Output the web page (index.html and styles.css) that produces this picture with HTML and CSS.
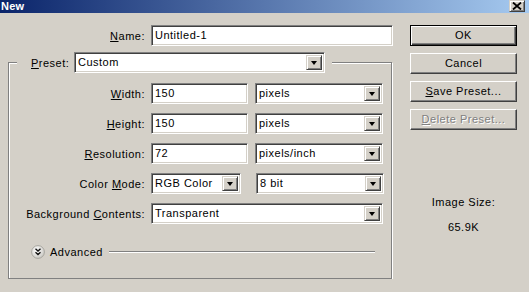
FILE: index.html
```html
<!DOCTYPE html>
<html lang="en">
<head>
    <meta charset="UTF-8">
    <title>New</title>
    <link rel="stylesheet" href="styles.css">
</head>
<body>
    <div class="titlebar">
        <span class="title">New</span>
        <span class="close">
            <svg width="10" height="8" viewBox="0 0 10 8"><path d="M1 0.5l8 7M9 0.5l-8 7" stroke="#000" stroke-width="1.8" fill="none"/></svg>
        </span>
    </div>
    <div class="dialog">
        <div class="main">
            <div class="row name-row">
                <span class="lbl"><u>N</u>ame:</span>
                <div class="field name-field">Untitled-1</div>
            </div>
            <fieldset class="group">
                <legend class="legend">
                    <span class="preset-lbl"><u>P</u>reset:</span>
                    <div class="field select preset">Custom<span class="arrow"></span></div>
                </legend>
                <div class="rows">
                    <div class="row">
                        <span class="lbl"><u>W</u>idth:</span>
                        <div class="field num">150</div>
                        <div class="field select unit">pixels<span class="arrow"></span></div>
                    </div>
                    <div class="row">
                        <span class="lbl"><u>H</u>eight:</span>
                        <div class="field num">150</div>
                        <div class="field select unit">pixels<span class="arrow"></span></div>
                    </div>
                    <div class="row">
                        <span class="lbl"><u>R</u>esolution:</span>
                        <div class="field num">72</div>
                        <div class="field select unit">pixels/inch<span class="arrow"></span></div>
                    </div>
                    <div class="row">
                        <span class="lbl">Color <u>M</u>ode:</span>
                        <div class="field select mode">RGB Color<span class="arrow"></span></div>
                        <div class="field select unit">8 bit<span class="arrow"></span></div>
                    </div>
                    <div class="row">
                        <span class="lbl">Background <u>C</u>ontents:</span>
                        <div class="field select wide">Transparent<span class="arrow"></span></div>
                    </div>
                </div>
                <div class="advanced">
                    <svg class="adv-icon" width="14" height="14" viewBox="0 0 14 14">
                        <defs>
                            <radialGradient id="ball" cx="0.4" cy="0.35" r="0.7">
                                <stop offset="0" stop-color="#ffffff"/>
                                <stop offset="1" stop-color="#c8c6c0"/>
                            </radialGradient>
                        </defs>
                        <circle cx="7" cy="7" r="6.4" fill="url(#ball)" stroke="#9c9a94" stroke-width="0.8"/>
                        <path d="M4.5 3.8l2.5 2.2l2.5-2.2M4.5 7.3l2.5 2.2l2.5-2.2" stroke="#111" stroke-width="1.4" fill="none"/>
                    </svg>
                    <span class="adv-text">Advanced</span>
                    <span class="adv-line"></span>
                </div>
            </fieldset>
        </div>
        <div class="side">
            <div class="btn default">OK</div>
            <div class="btn">Cancel</div>
            <div class="btn"><u>S</u>ave Preset...</div>
            <div class="btn disabled"><u>D</u>elete Preset...</div>
            <div class="size-lbl">Image Size:</div>
            <div class="size-val">65.9K</div>
        </div>
    </div>
</body>
</html>
```

FILE: styles.css
```css
body {
    margin: 0;
    background: #d4d0c8;
    font-family: "Liberation Sans", Arial, sans-serif;
    font-size: 11px;
    letter-spacing: 0.5px;
    color: #000;
    overflow: hidden;
}
.titlebar {
    height: 13px;
    display: flex;
    justify-content: space-between;
    align-items: flex-start;
    padding-right: 4px;
    background: linear-gradient(to right, #0a246a, #a6caf0);
}
.title {
    color: #fff;
    font-weight: bold;
    letter-spacing: 0.2px;
    line-height: 12px;
    padding-left: 1px;
}
.close {
    width: 16px;
    height: 12px;
    box-sizing: border-box;
    display: flex;
    align-items: center;
    justify-content: center;
    background: #d4d0c8;
    border: 1px solid;
    border-color: #d4d0c8 #404040 #404040 #d4d0c8;
    box-shadow: inset 1px 1px 0 #fff, inset -1px -1px 0 #808080;
}
.dialog {
    display: flex;
    padding-top: 12px;
}
.main {
    width: 393px;
}
.row {
    display: flex;
    align-items: center;
    gap: 6px;
}
.lbl {
    width: 136px;
    text-align: right;
}
.name-row .lbl {
    width: 145px;
}
.field {
    height: 21px;
    box-sizing: border-box;
    background: #fff;
    border: 1px solid;
    border-color: #808080 #fff #fff #808080;
    box-shadow: inset 1px 1px 0 #404040, inset -1px -1px 0 #d4d0c8;
    padding: 0 3px;
    line-height: 19px;
    position: relative;
}
.name-field {
    width: 242px;
}
.select {
    padding-right: 20px;
}
.arrow {
    position: absolute;
    right: 2px;
    top: 2px;
    width: 16px;
    height: 15px;
    box-sizing: border-box;
    background: #d4d0c8;
    border: 1px solid;
    border-color: #d4d0c8 #404040 #404040 #d4d0c8;
    box-shadow: inset 1px 1px 0 #fff, inset -1px -1px 0 #808080;
    display: flex;
    align-items: center;
    justify-content: center;
}
.arrow::after {
    content: "";
    border-top: 4px solid #000;
    border-left: 3.5px solid transparent;
    border-right: 3.5px solid transparent;
}
.group {
    margin: 6px 0 0 8px;
    width: 384px;
    box-sizing: border-box;
    padding: 10px 0 19px 0;
    border: 1px solid #808080;
    box-shadow: inset 1px 1px 0 #fff, 1px 1px 0 #fff;
    min-inline-size: 0;
}
.legend {
    display: flex;
    align-items: center;
    gap: 4px;
    margin-left: 8px;
    padding: 0 7px 0 14px;
    background: #d4d0c8;
}
.preset-lbl {
    width: 39px;
}
.preset {
    width: 251px;
}
.rows {
    display: flex;
    flex-direction: column;
    gap: 9px;
}
.num {
    width: 97px;
}
.unit {
    width: 128px;
    margin-left: 1px;
}
.mode {
    width: 90px;
    margin-right: 8px;
}
.wide {
    width: 232px;
}
.advanced {
    display: flex;
    align-items: center;
    margin-top: 21px;
    padding-left: 22px;
    padding-right: 16px;
}
.adv-text {
    margin-left: 5px;
}
.adv-line {
    flex: 1;
    margin-left: 6px;
    border-top: 1px solid #808080;
    border-bottom: 1px solid #fff;
}
.side {
    width: 107px;
    margin-left: 17px;
    display: flex;
    flex-direction: column;
    gap: 7px;
}
.btn {
    height: 21px;
    box-sizing: border-box;
    text-align: center;
    line-height: 19px;
    border: 1px solid;
    border-color: #fff #404040 #404040 #fff;
    box-shadow: inset -1px -1px 0 #808080;
}
.btn.default {
    border-color: #000;
    box-shadow: inset 1px 1px 0 #fff, inset -1px -1px 0 #404040, inset -2px -2px 0 #808080;
}
.btn.disabled {
    color: #808080;
    text-shadow: 1px 1px 0 #fff;
}
.size-lbl {
    text-align: center;
    margin-top: 59px;
    line-height: 13px;
}
.size-val {
    text-align: center;
    margin-top: 5px;
    line-height: 13px;
}
```
